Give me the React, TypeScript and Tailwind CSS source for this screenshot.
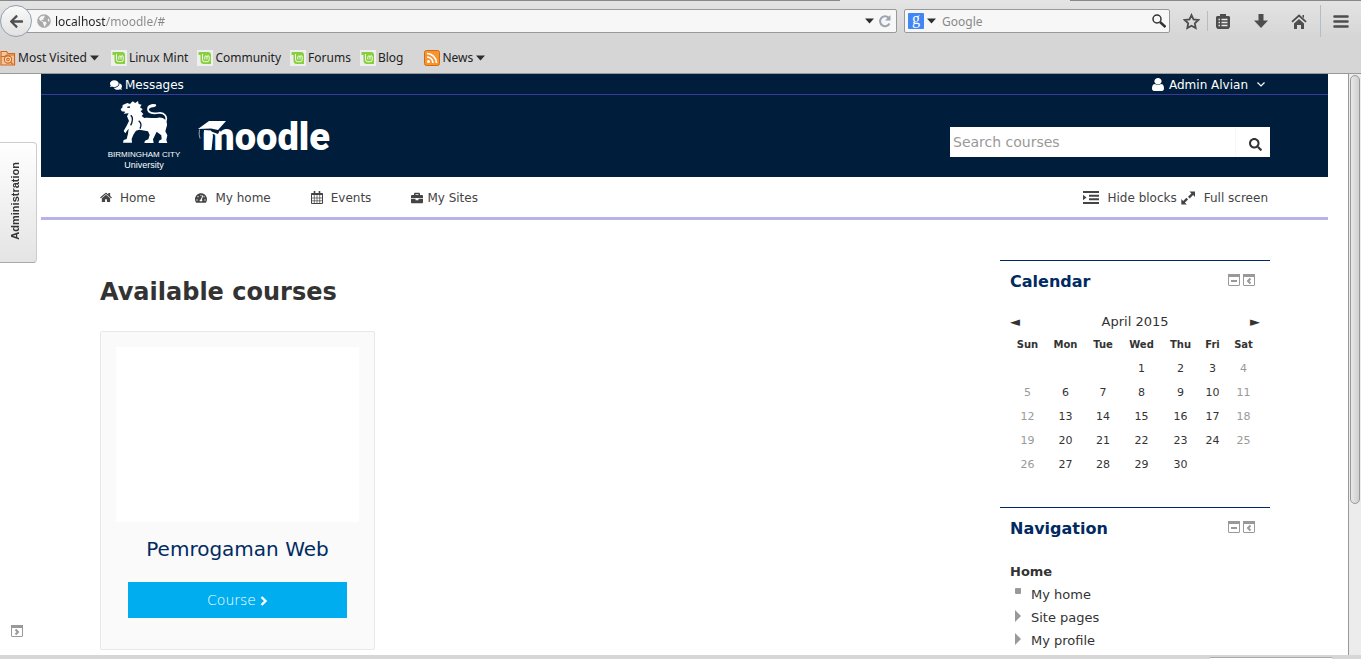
import type { ReactNode } from 'react'
import clsx from 'clsx'
import {
  FaArrowLeft,
  FaBriefcase,
  FaComments,
  FaGlobeAmericas,
  FaSearch,
  FaTachometerAlt,
} from 'react-icons/fa'

const days = ['Sun', 'Mon', 'Tue', 'Wed', 'Thu', 'Fri', 'Sat']

const weeks: (number | null)[][] = [
  [null, null, null, 1, 2, 3, 4],
  [5, 6, 7, 8, 9, 10, 11],
  [12, 13, 14, 15, 16, 17, 18],
  [19, 20, 21, 22, 23, 24, 25],
  [26, 27, 28, 29, 30, null, null],
]

function Caret({ className }: { className?: string }) {
  return (
    <svg viewBox="0 0 9 6" className={clsx('h-[6px] w-[9px] shrink-0', className)} fill="#2e2e2e">
      <path d="M0 0.5h9L4.5 5.5z" />
    </svg>
  )
}

function MintIcon() {
  return (
    <svg viewBox="0 0 16 16" className="size-4 shrink-0">
      <rect width="16" height="16" fill="#efefef" />
      <path d="M1.500 2H11a3 3 0 0 1 3 3V14H7a3.500 3.500 0 0 1-3.500-3.500V5h-2z" fill="#87cf3e" />
      <path d="M5.500 4V9.500a2.200 2.200 0 0 0 2.200 2.200h2.500a2 2 0 0 0 2-2V6.800a1.100 1.100 0 0 0-2.200 0V9.500M10 7a1.100 1.100 0 0 0-2.200 0V9.500" fill="none" stroke="#fff" strokeWidth="0.900" />
    </svg>
  )
}

function FolderIcon() {
  return (
    <svg viewBox="0 0 16 16" className="size-4 shrink-0" fill="none" stroke="#d2691e" strokeWidth="1.2">
      <path d="M1 15V1.500h5.500L8 3.500h6.500V15z" fill="#f3c79b" />
      <path d="M1 6.500h4l1.500-1.500h8" />
      <circle cx="8" cy="9.500" r="3.600" fill="#fbe6d0" />
      <circle cx="8" cy="9.500" r="1.300" />
      <path d="M10.500 12l2.500 2.500" />
    </svg>
  )
}

function FeedIcon() {
  return (
    <svg viewBox="0 0 16 16" className="size-4 shrink-0">
      <rect x="0.500" y="0.500" width="15" height="15" rx="2" fill="#f79432" stroke="#d96a0b" />
      <circle cx="4.500" cy="11.500" r="1.500" fill="#fff" />
      <path d="M3 7a6 6 0 0 1 6 6M3 3.500A9.500 9.500 0 0 1 12.500 13" fill="none" stroke="#fff" strokeWidth="1.700" />
    </svg>
  )
}

function StarIcon() {
  return (
    <svg viewBox="0 0 17 17" className="size-[17px]" fill="none" stroke="currentColor" strokeWidth="1.800">
      <path d="M8.500 2l2 4.400 4.800.6-3.500 3.300.9 4.800-4.200-2.400-4.200 2.400.9-4.800L1.700 7l4.800-.6z" />
    </svg>
  )
}

function DownloadIcon() {
  return (
    <svg viewBox="0 0 14 14" className="size-[14px]" fill="currentColor">
      <path d="M4.500 0h5v6.500H14L7 14 0 6.500h4.500z" />
    </svg>
  )
}

function HomePageIcon() {
  return (
    <svg viewBox="0 0 16 15" className="h-[15px] w-4">
      <path d="M1 7.800l7-6.300 7 6.300" fill="none" stroke="currentColor" strokeWidth="1.800" />
      <path d="M3 9.500l5-4.500 5 4.500V15h-3v-4H6v4H3z" fill="currentColor" />
      <path d="M11.500 1H13v3l-1.500-1z" fill="currentColor" />
    </svg>
  )
}

function HouseIcon() {
  return (
    <svg viewBox="0 0 1664 1792" className="h-[13px] w-3 shrink-0" fill="currentColor">
      <path d="M1408 992v480q0 26-19 45t-45 19h-384v-384h-256v384h-384q-26 0-45-19t-19-45v-480q0-1 .5-3t.5-3l575-474 575 474q1 2 1 6zm223-69l-62 74q-8 9-21 11h-3q-13 0-21-7l-692-577-692 577q-12 8-24 7-13-2-21-11l-62-74q-8-10-7-23.500t11-21.500l719-599q32-26 76-26t76 26l244 204v-195q0-14 9-23t23-9h192q14 0 23 9t9 23v408l219 182q10 8 11 21.500t-7 23.500z" />
    </svg>
  )
}

function PersonIcon() {
  return (
    <svg viewBox="0 128 1280 1536" className="h-[13px] w-3 shrink-0" preserveAspectRatio="none" fill="currentColor">
      <path d="M1280 1399q0 109-62.500 187t-150.500 78h-854q-88 0-150.500-78t-62.500-187q0-85 8.500-160.500t31.500-152 58.500-131 94-89 134.500-34.500q131 128 313 128t313-128q76 0 134.500 34.500t94 89 58.500 131 31.500 152 8.500 160.500zm-256-887q0 159-112.500 271.500t-271.500 112.500-271.500-112.500-112.500-271.500 112.500-271.500 271.500-112.500 271.500 112.500 112.500 271.500z" />
    </svg>
  )
}

function CalendarIcon() {
  return (
    <svg viewBox="0 0 12 13" className="h-[13px] w-3 shrink-0" fill="none" stroke="#444">
      <path d="M0.500 2.500h11v10h-11z" />
      <path d="M0.500 3h11" strokeWidth="2" />
      <path d="M3.300 4v8.500M6 4v8.500M8.700 4v8.500M0.500 7h11M0.500 9.800h11" strokeWidth="0.700" />
      <path d="M3.500 0v3M8.500 0v3" strokeWidth="1.600" />
    </svg>
  )
}

function IndentIcon() {
  return (
    <svg viewBox="0 0 16 13" className="h-[13px] w-4 shrink-0" fill="none" stroke="#444" strokeWidth="2">
      <path d="M0 1h16M6 4.700h10M6 8.300h10M0 12h16" />
      <path d="M0 3.800l3.500 2.700L0 9.200z" fill="#444" stroke="none" />
    </svg>
  )
}

function ExpandIcon() {
  return (
    <svg viewBox="0 0 14 14" className="size-[14px] shrink-0" fill="#444">
      <path d="M8.500 0.500H14V6l-1.900-1.900-3.400 3.400-1.700-1.700 3.400-3.400zM0.300 8l1.900 1.900 3.200-3.200 1.700 1.700-3.200 3.200 1.900 1.900H0.300z" />
    </svg>
  )
}

function BlockIcon({ kind }: { kind: 'hide' | 'dock' | 'undock' }) {
  return (
    <svg viewBox="0 0 12 12" className="block size-3 shrink-0" fill="none" stroke="#999">
      <rect x="0.500" y="0.500" width="11" height="11" rx="0.500" />
      <path d="M0 1.500h12" strokeWidth="3" />
      {kind === 'hide' && <path d="M3 7h6" strokeWidth="2" />}
      {kind === 'dock' && <path d="M7.500 4.500L5 7l2.500 2.500" strokeWidth="2" />}
      {kind === 'undock' && <path d="M4.500 4.500L7 7 4.500 9.500" strokeWidth="2" />}
    </svg>
  )
}

function UniversityLogo() {
  return (
    <svg viewBox="0 0 76 72" className="h-[72px] w-[76px]" fill="#fff">
      <g transform="translate(-16 -29) scale(0.3333)">
        <path d="M98 99l14-6 8 3 8-8 8 5 8-6 2 9 9 2-5 8 8 6-6 6 8 8-5 6 8 6c16-2 28 2 42-1 16-2 27 8 26 23l-5 18 6 12-3 14 3 9h-26l1-7 8-4-1-12-14-11-5 11-6 12 2 11h-28l2-7 10-4 4-13-5-11-26-5-10 3-8 12-5 13 1 11h-27l2-8 9-3 4-16 2-15-5 6-5 8-5-7 9-16 7-14-6-14 5-9-15 1 5-6-11-1-3-7 5-4z" />
        <path d="M225 152c10-18-2-32-20-29-16 3-30 0-31-11s12-16 24-11" fill="none" stroke="#fff" strokeWidth="5" />
        <path d="M176 112c-2-12 8-17 22-15l-4 8c-8 0-14 2-18 7z" />
        <path d="M122 130c8 4 6 20 0 30M146 146c8 6 8 16 4 24M112 106l8-1" fill="none" stroke="#001e3c" strokeWidth="4" />
      </g>
      <text x="38" y="56" textAnchor="middle" className="font-['Liberation_Sans'] text-[8px]">BIRMINGHAM CITY</text>
      <text x="38" y="67" textAnchor="middle" className="font-['Liberation_Sans'] text-[9px]">University</text>
    </svg>
  )
}

function MoodleLogo() {
  return (
    <svg viewBox="0 0 140 54" className="h-[54px] w-[140px]">
      <text x="4" y="41" fill="#fff" className="font-['Roboto'] text-[38px] font-black">moodle</text>
      <path d="M3 15h22l-5 10-8-3-9 1z" fill="#001e3c" />
      <path d="M6 21l7 0.500 2 5-1.500 14.500H6.500z" fill="#fff" />
      <path d="M0 20L11 12h17l-8 9-7-1.500z" fill="#fff" />
      <path d="M1.500 20.500q-1 5 0.500 9" fill="none" stroke="#fff" strokeWidth="0.600" />
    </svg>
  )
}

function Bookmark({ icon, label, menu }: { icon: ReactNode; label: string; menu?: boolean }) {
  return (
    <a href="#" className="flex items-center gap-[2px]">
      {icon}
      <span>{label}</span>
      {menu && <Caret className="ml-px" />}
    </a>
  )
}

function BrowserChrome() {
  return (
    <header className="shrink-0 border-b border-[#999] bg-linear-to-b from-[#e4e4e4] to-[#d6d6d6] to-50% font-['Noto_Sans',sans-serif] text-[12px] text-[#222]">
      <div className="flex h-px bg-[#888]">
        <div className="ml-[840px] w-[230px] bg-[#e4e4e4]" />
      </div>
      <div className="flex h-10 items-center pr-3">
        <button aria-label="Back" className="z-10 flex size-8 shrink-0 items-center justify-center rounded-full border border-[#93a0ad] bg-linear-to-b from-[#fafafa] to-[#e2e2e2] text-[#505050]">
          <FaArrowLeft size={15} />
        </button>
        <div className="-ml-2 flex h-6 flex-1 items-center rounded-r-xs border border-[#999] bg-[#f7f7f7] pr-1 pl-3">
          <FaGlobeAmericas size={14} className="mr-1 text-[#aaa]" />
          {/* the host part is darker than the path */}
          <input
            aria-label="Address"
            defaultValue="localhost/moodle/#"
            className="h-5 min-w-0 flex-1 bg-linear-to-r from-[#222] from-[51px] to-[#888] to-[51px] bg-clip-text pt-px text-transparent outline-none"
          />
          <Caret />
          <button aria-label="Reload" className="ml-1 text-[#9aa5b0]">
            <svg viewBox="0 0 14 14" className="size-[14px]" fill="none" stroke="currentColor" strokeWidth="2">
              <path d="M11.500 9.500A5 5 0 1 1 10.500 3.500" />
              <path d="M12.500 1v5.500H7z" fill="currentColor" stroke="none" />
            </svg>
          </button>
        </div>
        <div className="ml-[7px] flex h-6 w-[266px] items-center rounded-xs border border-[#999] bg-[#f7f7f7] px-[3px]">
          <span className="flex size-4 items-center justify-center rounded-[1px] bg-[#4285f4] pb-1 font-['Liberation_Serif'] text-[16px] leading-4 text-white">g</span>
          <Caret className="ml-[3px]" />
          <input aria-label="Google" placeholder="Google" className="ml-1.5 h-5 min-w-0 flex-1 bg-transparent pt-px outline-none placeholder:text-[#888]" />
          <button aria-label="Search">
            <svg viewBox="0 0 14 14" className="size-[14px]" fill="none" stroke="#333">
              <circle cx="5" cy="5" r="4" strokeWidth="1.500" />
              <path d="M8 8l5.500 5" strokeWidth="2.400" />
            </svg>
          </button>
        </div>
        <div className="flex items-center text-[#4d4d4d]">
          <button aria-label="Bookmark this page" className="ml-[13px]"><StarIcon /></button>
          <div className="ml-[7px] h-5 w-px bg-[#bbb]" />
          <button aria-label="Bookmarks" className="ml-2">
            <svg viewBox="0 0 14 15" className="h-[15px] w-[14px]">
              <path d="M4 0h6v2h3l1 1v10l-1.500 2h-11L0 13V3l1-1h3z" fill="currentColor" />
              <path d="M2.500 5.500H4M5.500 5.500h6M2.500 8.500H4M5.500 8.500h6M2.500 11.500H4M5.500 11.500h6" stroke="#e8e8e8" strokeWidth="1.600" />
            </svg>
          </button>
          <button aria-label="Downloads" className="ml-6"><DownloadIcon /></button>
          <button aria-label="Home page" className="ml-[23px]"><HomePageIcon /></button>
          <div className="ml-[13px] h-8 w-px bg-[#b4bcc6]" />
          <button aria-label="Menu" className="ml-3">
            <svg viewBox="0 0 16 13" className="h-[13px] w-4" stroke="currentColor" strokeWidth="2.600" strokeLinecap="round">
              <path d="M1.500 1.500h13M1.500 6.500h13M1.500 11.500h13" />
            </svg>
          </button>
        </div>
      </div>
      <nav className="flex h-8 items-center pt-px">
        <Bookmark icon={<FolderIcon />} label="Most Visited" menu />
        <div className="ml-3 flex gap-[9px]">
          <Bookmark icon={<MintIcon />} label="Linux Mint" />
          <Bookmark icon={<MintIcon />} label="Community" />
          <Bookmark icon={<MintIcon />} label="Forums" />
          <Bookmark icon={<MintIcon />} label="Blog" />
        </div>
        <div className="ml-[21px]">
          <Bookmark icon={<FeedIcon />} label="News" menu />
        </div>
      </nav>
    </header>
  )
}

function Block({ title, className, children }: { title: string; className?: string; children: ReactNode }) {
  return (
    <section className={clsx('border-t border-[#002b62] px-2.5', className)}>
      <div className="flex h-10 items-start justify-between pr-[5px]">
        <h2 className="pt-[9px] text-[16px] leading-6 font-bold text-[#002b62]">{title}</h2>
        <div className="flex gap-[3px] pt-[13px]">
          <button aria-label={`Hide ${title} block`}><BlockIcon kind="hide" /></button>
          <button aria-label={`Dock ${title} block`}><BlockIcon kind="dock" /></button>
        </div>
      </div>
      {children}
    </section>
  )
}

function Calendar() {
  return (
    <div>
      <div className="mt-[9px] flex h-[23px] items-center justify-between text-[13px] leading-5">
        <a href="#" aria-label="Previous month">◄</a>
        <a href="#">April 2015</a>
        <a href="#" aria-label="Next month">►</a>
      </div>
      <table className="w-[250px] table-fixed text-center text-[11px]">
        <colgroup>
          <col className="w-[35px]" />
          <col className="w-[41px]" />
          <col className="w-[34px]" />
          <col className="w-[43px]" />
          <col className="w-[35px]" />
          <col className="w-[29px]" />
          <col className="w-[33px]" />
        </colgroup>
        <thead>
          <tr className="h-6 text-[10px]">
            {days.map((day) => <th key={day} scope="col" className="p-0 pb-0.5">{day}</th>)}
          </tr>
        </thead>
        <tbody>
          {weeks.map((week, row) => (
            <tr key={row} className="h-6">
              {week.map((date, i) => (
                <td key={i} className={clsx('p-0', (i === 0 || i === 6) && 'text-[#999]')}>{date}</td>
              ))}
            </tr>
          ))}
        </tbody>
      </table>
    </div>
  )
}

function TreeItem({ label, leaf }: { label: string; leaf?: boolean }) {
  return (
    <li className="flex h-[23px] items-center">
      <svg viewBox="0 0 8 12" className="mr-2 mb-1 ml-[5px] h-3 w-2 shrink-0" fill="#999">
        {leaf ? <rect y="1" width="6" height="6" rx="1" /> : <path d="M0 0l6 6-6 6z" />}
      </svg>
      <a href="#">{label}</a>
    </li>
  )
}

function SiteHeader() {
  return (
    <div className="bg-[#001e3c] text-white">
      <div className="flex h-[21px] items-center justify-between border-b border-[#3a3a9c] pt-px pr-[63px] pl-[69px] text-[12px]">
        <a href="#" className="flex items-center gap-[3px]"><FaComments size={12} />Messages</a>
        <button className="flex items-center">
          <PersonIcon />
          <span className="ml-[5px]">Admin Alvian</span>
          <svg viewBox="0 0 8 5" className="ml-[9px] h-[5px] w-2" fill="none" stroke="currentColor" strokeWidth="1.200">
            <path d="M0.500 0.500L4 4l3.500-3.500" />
          </svg>
        </button>
      </div>
      <div className="flex h-[82px] items-start justify-between pr-[58px] pl-[65px]">
        <a href="#" className="flex pt-1.5">
          <UniversityLogo />
          <span className="mt-2 ml-4"><MoodleLogo /></span>
        </a>
        <form className="mt-8 flex h-[30px] w-80 bg-white">
          <label htmlFor="search" className="sr-only">Search courses</label>
          <input id="search" placeholder="Search courses" className="h-[30px] min-w-0 flex-1 border-r border-[#f7f7f7] pl-[3px] text-[14px] leading-5 text-[#333] outline-none placeholder:text-[#999]" />
          <button aria-label="Search" className="flex w-[34px] items-center justify-center pt-1 pl-1 text-[#333]"><FaSearch size={13} /></button>
        </form>
      </div>
    </div>
  )
}

function SiteNav() {
  return (
    <nav className="flex h-[43px] items-center justify-between border-b-3 border-[#b8b2ea] pt-px pr-[60px] pl-[59px] text-[12px] text-[#444]">
      <div className="flex items-center gap-10">
        <a href="#" className="flex items-center gap-2"><HouseIcon />Home</a>
        <a href="#" className="flex items-center gap-2"><FaTachometerAlt size={12} />My home</a>
        <a href="#" className="flex items-center gap-2"><CalendarIcon />Events</a>
        <a href="#" className="flex items-center gap-1"><FaBriefcase size={12} />My Sites</a>
      </div>
      <div className="flex items-center gap-1">
        <button className="flex items-center gap-[9px]"><IndentIcon />Hide blocks</button>
        <button className="flex items-center gap-[9px]"><ExpandIcon />Full screen</button>
      </div>
    </nav>
  )
}

export default function App() {
  return (
    <div className="flex h-screen flex-col overflow-hidden bg-white font-['DejaVu_Sans',sans-serif] text-[#333]">
      <BrowserChrome />
      <div className="flex min-h-0 flex-1">
        <aside className="flex w-[41px] shrink-0 flex-col justify-between pt-[68px] pb-[18px]">
          <button className="flex h-[121px] w-[37px] items-center justify-center rounded-r border border-l-0 border-[#ccc] border-b-[#aaa] bg-linear-to-b from-white to-[#e4e4e4] pr-1.5 pb-1 font-['Liberation_Sans'] text-[11px] font-bold">
            <span className="rotate-180 [writing-mode:vertical-rl]">Administration</span>
          </button>
          <button aria-label="Undock all" className="ml-[11px] w-3"><BlockIcon kind="undock" /></button>
        </aside>
        <div className="min-w-0 flex-1 overflow-hidden">
          <SiteHeader />
          <SiteNav />
          <div className="flex justify-between pr-[58px] pl-[59px]">
            <main>
              <h1 className="mt-14 text-[24px] leading-8 font-bold">Available courses</h1>
              <article className="mt-[23px] w-[275px] rounded-xs border border-[#e8e8e8] bg-[#fafafa] px-[15px] pt-[15px] pb-[31px] text-center">
                <div className="h-[175px] bg-white" />
                <h3 className="mt-[11px] text-[20px] leading-8 text-[#002b62]">Pemrogaman Web</h3>
                <a href="#" className="mx-3 mt-[17px] flex h-9 items-center justify-center gap-1 bg-[#00aeef] text-[14px] font-extralight text-white">
                  Course
                  <svg viewBox="0 0 8 10" className="mt-px h-2.5 w-2" fill="none" stroke="currentColor" strokeWidth="2.400">
                    <path d="M1.500 1L5.500 5 1.500 9" />
                  </svg>
                </a>
              </article>
            </main>
            <div className="mt-10 w-[270px] shrink-0">
              <Block title="Calendar"><Calendar /></Block>
              <Block title="Navigation" className="mt-[30px]">
                <ul className="mt-3 text-[13px]">
                  <li className="flex h-[23px] items-center font-bold"><a href="#">Home</a></li>
                  <TreeItem label="My home" leaf />
                  <TreeItem label="Site pages" />
                  <TreeItem label="My profile" />
                </ul>
              </Block>
            </div>
          </div>
        </div>
        <div className="ml-5 w-[13px] shrink-0 border-l border-[#999] bg-[#ececec] p-px">
          <div className="h-[429px] rounded-md border border-[#999] bg-linear-to-r from-[#e8e8e8] to-[#cfcfcf]" />
        </div>
      </div>
      <footer className="flex h-1 shrink-0 items-end bg-[#d6d6d6]">
        <div className="mr-7 ml-auto h-[2px] w-[124px] rounded-t border-t border-[#aaa] bg-white" />
      </footer>
    </div>
  )
}
